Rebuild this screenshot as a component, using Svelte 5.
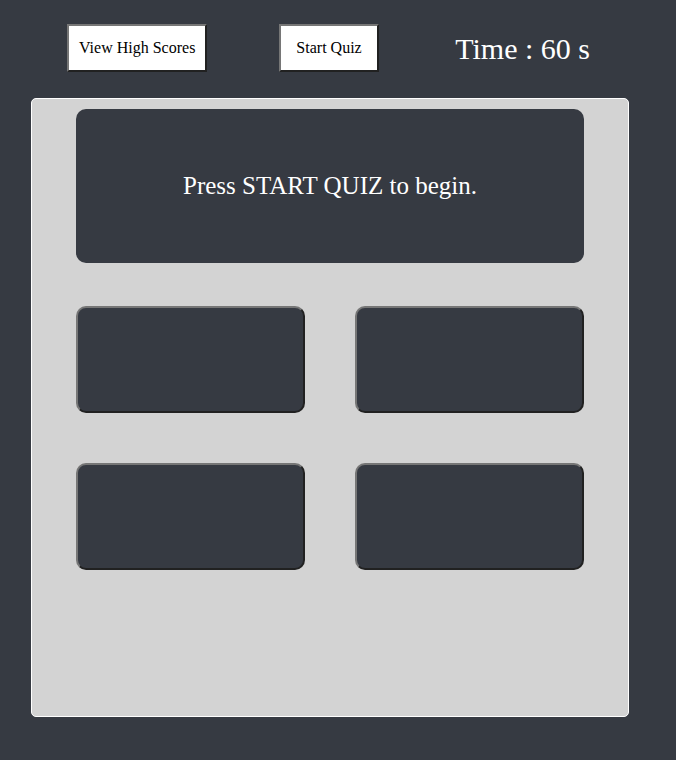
<script>
  let timeLeft = $state(60);
  let question = $state('Press START QUIZ to begin.');
  let answers = $state(['', '', '', '']);
</script>

<div class="page">
  <header>
    <button class="action" type="button">View High Scores</button>
    <button class="action start" type="button">Start Quiz</button>
    <div class="timer">Time : {timeLeft} s</div>
  </header>

  <main>
    <section class="question">{question}</section>
    <div class="answers">
      {#each answers as answer, i}
        <button class="answer" type="button" aria-label={answer || `Answer ${i + 1}`}>{answer}</button>
      {/each}
    </div>
  </main>
</div>

<style>
  :global(body) {
    background: #363a42;
  }

  .page {
    box-sizing: border-box;
    display: flex;
    flex-direction: column;
    gap: 26px;
    min-height: 100vh;
    padding: 24px 47px 43px 31px;
    font-family: "Liberation Serif", "Times New Roman", serif;
    color: #fff;
  }

  header {
    display: flex;
    align-items: center;
    gap: 72px;
    padding: 0 39px 0 36px;
  }

  .action {
    height: 48px;
    padding: 0 10px;
    border: 2px outset #767676;
    background: #fff;
    color: #000;
    font-family: inherit;
    font-size: 16px;
    white-space: nowrap;
  }

  .start {
    padding: 0 15px;
  }

  .timer {
    margin-left: auto;
    padding-top: 2px;
    font-size: 30px;
    line-height: 46px;
    white-space: nowrap;
  }

  main {
    flex: 1;
    display: flex;
    flex-direction: column;
    gap: 43px;
    padding: 10px 44px;
    border: 1px solid #fff;
    border-radius: 5px;
    background: #d3d3d3;
  }

  .question {
    display: flex;
    align-items: center;
    justify-content: center;
    min-height: 154px;
    border-radius: 10px;
    background: #363a42;
    font-size: 25px;
    text-align: center;
  }

  .answers {
    display: grid;
    grid-template-columns: 1fr 1fr;
    gap: 50px;
  }

  .answer {
    min-height: 107px;
    border: 2px outset #767676;
    border-radius: 10px;
    background: #363a42;
    color: #fff;
    font-family: inherit;
    font-size: 20px;
  }
</style>
